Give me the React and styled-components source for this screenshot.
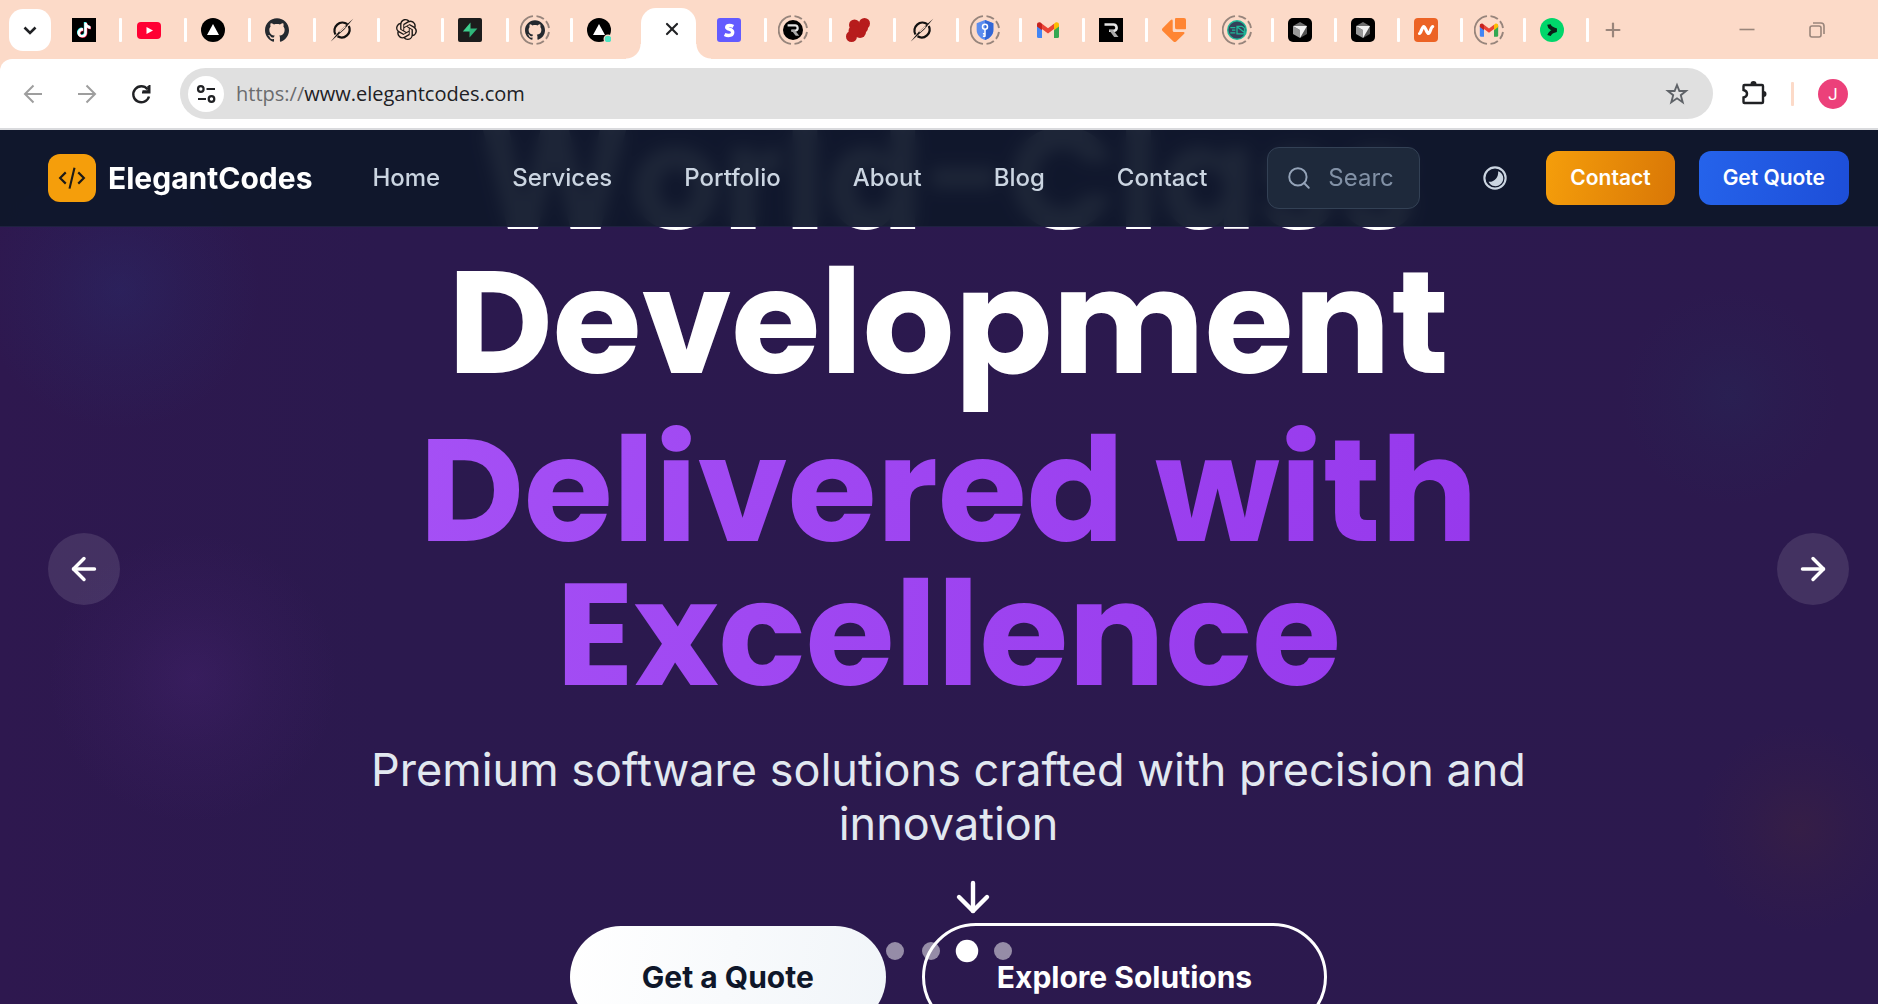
import React from "react";
import styled, { createGlobalStyle, css } from "styled-components";
import { ArrowLeft, ArrowRight, ArrowDown, X, Plus, Search } from "lucide-react";
import { SiGithub, SiOpenai, SiTiktok } from "react-icons/si";

const GlobalStyle = createGlobalStyle`
  *, *::before, *::after { box-sizing: border-box; }
  body { margin: 0; background: #2c1a4e; overflow: hidden; }
  button, input { font: inherit; color: inherit; }
  a { color: inherit; text-decoration: none; }
`;

const Window = styled.div`
  display: flex;
  flex-direction: column;
  height: 100vh;
  overflow: hidden;
  font-family: Inter, "Liberation Sans", sans-serif;
`;

/* ---------- browser: tab strip ---------- */

const TabStrip = styled.div`
  display: flex;
  align-items: center;
  height: 59px;
  flex: none;
  background: #fcdac8;
`;

const PlainButton = styled.button`
  display: flex;
  align-items: center;
  justify-content: center;
  flex: none;
  padding: 0;
  border: 0;
  background: none;
`;

const TabSearch = styled(PlainButton)`
  width: 42px;
  height: 42px;
  margin: 0 6px 0 9px;
  border-radius: 14px;
  background: #fff;
`;

const TabGroup = styled.div`
  display: flex;
  flex: none;
  width: ${(p) => p.$width}px;
`;

const Tab = styled(PlainButton)`
  flex: 1;
  height: 32px;
  padding-right: 10px;
  justify-content: center;
  position: relative;
  ${(p) =>
    p.$divided &&
    css`
      &::after {
        content: "";
        position: absolute;
        right: -1px;
        top: 4px;
        width: 3px;
        height: 24px;
        border-radius: 1px;
        background: #fff;
      }
    `}
`;

const ActiveTab = styled.div`
  display: flex;
  align-items: center;
  justify-content: center;
  align-self: flex-end;
  flex: none;
  position: relative;
  width: 55px;
  height: 51px;
  margin: 0 6px 0 5px;
  padding: 0 0 9px 6px;
  border-radius: 15px 15px 0 0;
  background: #fff;
  &::before,
  &::after {
    content: "";
    position: absolute;
    bottom: 0;
    width: 15px;
    height: 15px;
  }
  &::before {
    right: 100%;
    background: radial-gradient(circle at 0 0, transparent 14px, #fff 15px);
  }
  &::after {
    left: 100%;
    background: radial-gradient(circle at 100% 0, transparent 14px, #fff 15px);
  }
`;

const NewTab = styled(PlainButton)`
  width: 24px;
  height: 24px;
  margin-left: 13px;
  color: #99857b;
`;

const WindowControls = styled.div`
  display: flex;
  gap: 46px;
  margin-left: auto;
  margin-right: 49px;
`;

const ControlButton = styled(PlainButton)`
  width: 24px;
  height: 24px;
`;

/* ---------- browser: toolbar ---------- */

const ToolbarBack = styled.div`
  flex: none;
  background: #fcdac8;
`;

const Toolbar = styled.div`
  display: flex;
  align-items: center;
  height: 71px;
  padding: 0 30px 0 21px;
  border-bottom: 2px solid #d9dadd;
  border-radius: 12px 0 0 0;
  background: #fff;
`;

const NavTools = styled.div`
  display: flex;
  gap: 30px;
  margin-right: 27px;
`;

const NavTool = styled(PlainButton)`
  width: 24px;
  height: 24px;
`;

const Omnibox = styled.div`
  display: flex;
  align-items: center;
  flex: 1;
  height: 51px;
  padding: 0 24px 0 8px;
  border-radius: 26px;
  background: #e0e0e0;
`;

const SiteInfo = styled(PlainButton)`
  width: 36px;
  height: 36px;
  border-radius: 50%;
  background: #fff;
`;

const Address = styled.a`
  flex: 1;
  margin-left: 12px;
  font-family: "Open Sans", "Noto Sans", sans-serif;
  font-size: 20px;
  line-height: 28px;
  color: #202124;
`;

const Scheme = styled.span`
  color: #6b6c6e;
`;

const Extensions = styled(PlainButton)`
  width: 28px;
  height: 28px;
  margin-left: 27px;
`;

const ToolbarRule = styled.div`
  width: 3px;
  height: 24px;
  margin: 0 24px 0 23px;
  border-radius: 1px;
  background: #fcdac8;
`;

const Avatar = styled(PlainButton)`
  width: 30px;
  height: 30px;
  border-radius: 50%;
  background: #ec407a;
  color: #fff;
  font-family: Roboto, sans-serif;
  font-size: 17px;
`;

/* ---------- site ---------- */

const Viewport = styled.div`
  flex: 1;
  min-height: 0;
  overflow: hidden;
`;

const Site = styled.div`
  position: relative;
  width: calc(100% + 19px);
  height: 100%;
  overflow: hidden;
  background:
    radial-gradient(circle 140px at 120px 160px, rgba(38, 60, 130, 0.24), rgba(38, 60, 130, 0.1) 50%, transparent),
    radial-gradient(circle 145px at 193px 548px, rgba(105, 50, 160, 0.18), rgba(105, 50, 160, 0.07) 50%, transparent),
    radial-gradient(circle 110px at calc(100% - 167px) 266px, rgba(30, 60, 100, 0.18), rgba(30, 60, 100, 0.07) 50%, transparent),
    radial-gradient(circle 105px at calc(100% - 97px) 698px, rgba(90, 50, 40, 0.2), rgba(90, 50, 40, 0.08) 50%, transparent),
    linear-gradient(90deg, #2e184f, #2b194e 20%, #2c194e);
`;

const Header = styled.header`
  position: absolute;
  z-index: 2;
  top: 0;
  left: 0;
  right: 0;
  display: flex;
  align-items: center;
  height: 97px;
  padding: 0 48px;
  border-bottom: 1px solid #1e2140;
  background: rgba(15, 23, 42, 0.94);
  backdrop-filter: blur(8px);
`;

const Brand = styled.a`
  display: flex;
  align-items: center;
  gap: 12px;
  margin-right: 60px;
  color: #fff;
  font-size: 30px;
  font-weight: 700;
  line-height: 36px;
`;

const BrandMark = styled.span`
  display: flex;
  align-items: center;
  justify-content: center;
  width: 48px;
  height: 48px;
  border-radius: 12px;
  background: #f59e0b;
`;

const Menu = styled.nav`
  display: flex;
  gap: 72px;
  margin-right: 60px;
  color: #cbd5e1;
  font-size: 24px;
  font-weight: 500;
  line-height: 36px;
`;

const SearchBox = styled.label`
  display: flex;
  align-items: center;
  gap: 16px;
  width: 153px;
  height: 62px;
  padding: 0 24px 0 18px;
  border: 1px solid #334155;
  border-radius: 12px;
  background: #1e293b;
  color: #94a3b8;
  svg { flex: none; }
`;

const SearchInput = styled.input`
  width: 66px;
  min-width: 0;
  padding: 0;
  border: 0;
  outline: 0;
  background: none;
  font-size: 24px;
  line-height: 36px;
  &::placeholder { color: #8291a6; opacity: 1; }
`;

const ThemeToggle = styled(PlainButton)`
  width: 30px;
  height: 30px;
  margin-left: auto;
  margin-right: 36px;
`;

const HeaderActions = styled.div`
  display: flex;
  gap: 24px;
`;

const HeaderAction = styled.a`
  padding: 0 24px;
  border-radius: 12px;
  background: ${(p) => p.$fill};
  color: #fff;
  font-size: 21px;
  font-weight: 600;
  line-height: 54px;
`;

const Hero = styled.main`
  display: flex;
  flex-direction: column;
  align-items: center;
  margin-top: -23px;
  text-align: center;
`;

const Title = styled.h1`
  width: 100%;
  max-width: 1536px;
  margin: 0;
  color: #fff;
  font-family: Poppins, Inter, sans-serif;
  font-size: 144px;
  font-weight: 700;
  line-height: 144px;
`;

const TitleLine = styled.span`
  display: block;
`;

const Accent = styled.span`
  display: block;
  margin-top: 24px;
  background: linear-gradient(100deg, #a855f7, #9333ea);
  background-clip: text;
  -webkit-background-clip: text;
  color: transparent;
`;

const Lead = styled.p`
  max-width: 1344px;
  margin: 36px 0 72px;
  color: #e2e8f0;
  font-size: 45px;
  line-height: 54px;
`;

const HeroActions = styled.div`
  display: flex;
  align-items: center;
  gap: 36px;
`;

const HeroAction = styled.a`
  padding: 0 72px;
  border-radius: 54px;
  font-size: 30px;
  font-weight: 700;
  line-height: 102px;
  ${(p) =>
    p.$outline
      ? css`
          border: 3px solid #fff;
          color: #fff;
        `
      : css`
          background: linear-gradient(100deg, #fff, #f1f5f9);
          color: #0f172a;
        `}
`;

const SlideButton = styled(PlainButton)`
  position: absolute;
  top: 403px;
  ${(p) => p.$side}: 48px;
  width: 72px;
  height: 72px;
  border-radius: 50%;
  background: rgba(255, 255, 255, 0.11);
  color: #fff;
`;

const ScrollCue = styled(PlainButton)`
  position: absolute;
  left: 50%;
  top: 743px;
  color: #fff;
`;

const Dots = styled.div`
  position: absolute;
  top: 812px;
  left: 0;
  right: 0;
  display: flex;
  justify-content: center;
  gap: 18px;
  pointer-events: none;
`;

const Dot = styled(PlainButton)`
  width: 18px;
  height: 18px;
  border-radius: 50%;
  background: ${(p) => (p.$active ? "#fff" : "rgba(255, 255, 255, 0.5)")};
  transform: ${(p) => (p.$active ? "scale(1.25)" : "none")};
`;

/* ---------- favicons ---------- */

const Ico = ({ size = 24, children, box = "0 0 24 24" }) => (
  <svg width={size} height={size} viewBox={box} fill="none">{children}</svg>
);

const Ringed = ({ children }) => (
  <Ico size={30} box="0 0 30 30">
    <g stroke="#97857c" strokeWidth="1.9">
      <path d="M13 1.1A14 14 0 0 0 13 28.9" />
      <path d="M16.5 1.1A14 14 0 0 1 29 13" strokeDasharray="8 3" />
      <path d="M16.5 28.9A14 14 0 0 0 29 17" strokeDasharray="8 3" />
    </g>
    <svg x="5" y="5" width="20" height="20" viewBox="0 0 24 24">{children}</svg>
  </Ico>
);

const TikTok = () => (
  <Ico>
    <path d="M0 0h24v24H0z" fill="#000" />
    <SiTiktok size={15} x="4" y="4" color="#25f4ee" />
    <SiTiktok size={15} x="5" y="5" color="#fe2c55" />
    <SiTiktok size={15} x="4.5" y="4.5" color="#fff" />
  </Ico>
);
const YouTube = () => (
  <Ico>
    <rect y="4" width="24" height="17" rx="4" fill="#ff0033" />
    <path d="m9.5 9 6.5 3.5-6.500 3.500z" fill="#fff" />
  </Ico>
);
const Vercel = ({ live }) => (
  <Ico>
    <circle cx="12" cy="12" r="12" fill="#000" />
    <path d="m12 6 6 11H6z" fill="#fff" />
    {live && <circle cx="21" cy="21" r="4.500" fill="#fcdac8" />}
    {live && <circle cx="21" cy="21" r="3.300" fill="#50e3c2" />}
  </Ico>
);
const Grok = () => (
  <Ico>
    <path d="M17.300 6.200A8 8 0 0 0 5.500 16.500M7.500 18.300A8 8 0 0 0 18.800 8" stroke="#111" strokeWidth="2.300" />
    <path d="M.8 23.500 9 13.500 23.200.8 14.500 11.200z" fill="#111" />
    <path d="m9.500 14 6-5.500" stroke="#fcdac8" strokeWidth="1.200" />
  </Ico>
);
const Supabase = () => (
  <Ico>
    <rect width="24" height="24" rx="2" fill="#1c1c1c" />
    <path d="M12.500 4.500 4.800 13.500h7.700z" fill="#3ecf8e" />
    <path d="M11.500 19.500 19.400 10.500h-7.900z" fill="#2fb67a" />
  </Ico>
);
const Stripe = () => (
  <Ico>
    <rect width="24" height="24" rx="3" fill="#635bff" />
    <path d="M16.300 8.500c-1.300-.7-2.600-1.100-3.900-1.100-1.800 0-2.700.7-2.700 1.800 0 2.600 6 1.300 6 5.100 0 2-1.600 3.200-4.200 3.200-1.300 0-2.700-.4-3.900-1" stroke="#fff" strokeWidth="3.400" />
  </Ico>
);
const RMark = () => (
  <>
    <path d="M5.500 6.500h9a3.200 3.200 0 0 1 1 6.200H10" stroke="#e4e4e4" strokeWidth="2.600" />
    <path d="m10 12 4 0 5.500 7h-4.300z" fill="#aaa" />
  </>
);
const RCircle = () => (
  <Ringed><circle cx="12" cy="12" r="12" fill="#000" /><RMark /></Ringed>
);
const RSquare = () => (
  <Ico><path d="M0 0h24v24H0z" fill="#000" /><RMark /></Ico>
);
const RedDots = () => (
  <Ico>
    <g fill="#b71c1c">
      <circle cx="8.500" cy="7" r="5.500" /><circle cx="18.500" cy="5.500" r="5.500" />
      <circle cx="14" cy="14" r="6" /><circle cx="5.500" cy="18.500" r="5.500" />
      <circle cx="8" cy="13" r="5.500" /><circle cx="17" cy="10" r="5" />
    </g>
  </Ico>
);
const Shield = () => (
  <Ringed>
    <path d="m12 0 10 4v8c0 5.500-4 10-10 12C6 22 2 17.500 2 12V4z" fill="#5b8def" />
    <path d="m12 0 10 4v8c0 5.500-4 10-10 12z" fill="#3367d6" />
    <circle cx="12" cy="8" r="3" stroke="#fff" strokeWidth="1.800" />
    <path d="M12 11v9M12 16.500h-2.500M12 19.500h-2.500" stroke="#fff" strokeWidth="1.800" />
  </Ringed>
);
const GmailMark = () => (
  <>
    <path d="M1 7v11.500A1.500 1.500 0 0 0 2.500 20H6v-9.500z" fill="#4285f4" />
    <path d="M23 7v11.500a1.500 1.500 0 0 1-1.500 1.500H18v-9.500z" fill="#34a853" />
    <path d="m18 5.700-6 4.500-6-4.500v5.200l6 4.500 6-4.500z" fill="#ea4335" />
    <path d="M1 6.500v2l5 3.700V5.700l-1.200-.9C3.200 3.600 1 4.700 1 6.500z" fill="#c5221f" />
    <path d="M23 6.500v2l-5 3.700V5.700l1.200-.9C20.800 3.600 23 4.700 23 6.500z" fill="#fbbc04" />
  </>
);
const Gmail = () => <Ico><GmailMark /></Ico>;
const RingedGmail = () => <Ringed><GmailMark /></Ringed>;
const OrangeBlocks = () => (
  <Ico>
    <path d="M8.500 2.200q2-1.700 2.200.6v9.700a1.500 1.500 0 0 0 1.500 1.500h9.300a1 1 0 0 1 .7 1.700l-8 7.700a2 2 0 0 1-2.800 0L.6 13a2 2 0 0 1 0-2.800z" fill="#ff8533" />
    <path d="M14 0h8a2 2 0 0 1 2 2v8.500a1 1 0 0 1-1 1h-8a2 2 0 0 1-2-2V1a1 1 0 0 1 1-1z" fill="#ff8533" />
    <path d="M11.900 0v10.700a1.800 1.800 0 0 0 1.800 1.800H24" stroke="#fcdac8" strokeWidth="1.800" />
  </Ico>
);
const MailDisc = () => (
  <Ringed>
    <circle cx="12" cy="12" r="12" fill="#1fb899" />
    <circle cx="12" cy="12" r="10.300" fill="#34405a" />
    <path d="M12 7.500h6l3 2.500v6.500h-9zM12 8l9 7M4 9h6M6 12h4M4 15.500h6" stroke="#1fb899" strokeWidth="1.500" />
  </Ringed>
);
const Cursor = () => (
  <Ico>
    <rect width="24" height="24" rx="5" fill="#000" />
    <path d="m12 4 7 4-7 4-7-4z" fill="#6d6d6d" />
    <path d="M5 8v8l7 4v-8z" fill="#999" />
    <path d="M19 8v8l-7 4v-8z" fill="#555" />
    <path d="M5 8h14l-7 12v-8z" fill="#f2f2f2" />
  </Ico>
);
const Namecheap = () => (
  <Ico>
    <rect width="24" height="24" rx="4" fill="#ec6325" />
    <path d="M5.500 15.500C7 15.500 8 8.500 9.700 8.500S12.800 15.500 14.500 15.500 17 8.500 18.700 8.500" stroke="#fff" strokeWidth="3.200" strokeLinecap="round" />
  </Ico>
);
const GreenArrow = () => (
  <Ico>
    <circle cx="12" cy="12" r="12" fill="#00d66b" />
    <path d="M9 6.500c.3 3.500 3.500 4.500 7.500 5.700C12.500 13 10 14.500 9 17.500" stroke="#0b2018" strokeWidth="3.600" />
  </Ico>
);
const GitHub = () => <SiGithub size={24} color="#24292f" />;
const RingedGitHub = () => <Ringed><SiGithub size={24} color="#24292f" /></Ringed>;
const OpenAI = () => <SiOpenai size={21} color="#1c1917" />;

const leftTabs = [
  ["TikTok", TikTok], ["YouTube", YouTube], ["Vercel", Vercel], ["GitHub", GitHub],
  ["Grok", Grok], ["ChatGPT", OpenAI], ["Supabase", Supabase], ["GitHub issues", RingedGitHub],
];
const middleTabs = [["Stripe", Stripe], ["Render", RCircle], ["Twilio", RedDots]];
const rightTabs = [
  ["Grok chat", Grok], ["Password manager", Shield], ["Gmail", Gmail], ["Resend", RSquare],
  ["Blocks", OrangeBlocks], ["Mail", MailDisc], ["Cursor", Cursor], ["Cursor docs", Cursor],
  ["Namecheap", Namecheap], ["Inbox", RingedGmail], ["Terminal", GreenArrow],
];

const Tabs = ({ items, width }) => (
  <TabGroup $width={width}>
    {items.map(([name, Icon]) => (
      <Tab key={name} aria-label={name} $divided><Icon /></Tab>
    ))}
  </TabGroup>
);

const Browser = () => (
  <>
    <TabStrip>
      <TabSearch aria-label="Search tabs">
        <Ico><path d="m6.500 9.500 5.500 5.500 5.500-5.500" stroke="#202124" strokeWidth="2.600" /></Ico>
      </TabSearch>
      <Tabs items={leftTabs} width={515} />
      <TabGroup $width={64}><Tab aria-label="Deployments"><Vercel live /></Tab></TabGroup>
      <ActiveTab><PlainButton aria-label="Close tab"><X size={20} color="#202124" strokeWidth={2.6} /></PlainButton></ActiveTab>
      <Tabs items={middleTabs} width={193} />
      <Tabs items={rightTabs} width={693} />
      <NewTab aria-label="New tab"><Plus size={22} strokeWidth={2.4} /></NewTab>
      <WindowControls>
        <ControlButton aria-label="Minimize"><Ico><path d="M4.500 11.500h15" stroke="#99857b" strokeWidth="1.600" /></Ico></ControlButton>
        <ControlButton aria-label="Restore">
          <Ico>
            <rect x="5" y="8" width="11" height="11" rx="2" stroke="#99857b" strokeWidth="1.600" />
            <path d="M8 5h8a3 3 0 0 1 3 3v8" stroke="#99857b" strokeWidth="1.600" />
          </Ico>
        </ControlButton>
      </WindowControls>
    </TabStrip>
    <ToolbarBack>
      <Toolbar>
        <NavTools>
          <NavTool aria-label="Back"><Ico><path d="M21 12H4.500M12.500 3.500 4 12l8.500 8.500" stroke="#9e9e9e" strokeWidth="2" /></Ico></NavTool>
          <NavTool aria-label="Forward"><Ico><path d="M3 12h16.500M11.500 3.500 20 12l-8.500 8.500" stroke="#9e9e9e" strokeWidth="2" /></Ico></NavTool>
          <NavTool aria-label="Reload">
            <Ico>
              <path d="M18.500 7.200A8 8 0 1 0 20 14.500" stroke="#202124" strokeWidth="2.400" />
              <path d="M20.500 3v7.500H13M13.500 9.300h5.800V4" stroke="#202124" strokeWidth="2" />
            </Ico>
          </NavTool>
        </NavTools>
        <Omnibox>
          <SiteInfo aria-label="Site information">
            <Ico>
              <g stroke="#202124" strokeWidth="2.200">
                <circle cx="6.800" cy="7" r="2.800" /><path d="M12.500 7H21M4 17h8" />
                <circle cx="17.500" cy="17" r="2.800" />
              </g>
            </Ico>
          </SiteInfo>
          <Address href="#"><Scheme>https://</Scheme>www.elegantcodes.com</Address>
          <PlainButton aria-label="Bookmark">
            <Ico><path d="m12 3 2.400 6h6.600l-5.200 4.200 1.900 7L12 16.300 6.300 20.200l1.900-7L3 9h6.600z" stroke="#5f6368" strokeWidth="1.900" /></Ico>
          </PlainButton>
        </Omnibox>
        <Extensions aria-label="Extensions">
          <Ico size={28} box="0 0 28 28">
            <path d="M4.500 5h17.500a1 1 0 0 1 1 1v16a1 1 0 0 1-1 1H4.500a1 1 0 0 1-1-1v-4.500c4.700-1 4.700-6.500 0-7.500V6a1 1 0 0 1 1-1z" stroke="#202124" strokeWidth="2.400" />
            <path d="M10.500 4a3 3 0 0 1 6 0zM23.500 11a3 3 0 0 1 0 6z" fill="#202124" />
          </Ico>
        </Extensions>
        <ToolbarRule />
        <Avatar aria-label="Profile">J</Avatar>
      </Toolbar>
    </ToolbarBack>
  </>
);

export default function App() {
  return (
    <Window>
      <GlobalStyle />
      <Browser />
      <Viewport>
        <Site>
          <Header>
            <Brand href="#">
              <BrandMark>
                <Ico size={30}>
                  <path d="m7 7.500-4.500 4.500L7 16.500M17 7.500l4.500 4.500-4.500 4.500M14 3.800 10 20.500" stroke="#1c1a17" strokeWidth="1.700" />
                </Ico>
              </BrandMark>
              ElegantCodes
            </Brand>
            <Menu>
              {["Home", "Services", "Portfolio", "About", "Blog", "Contact"].map((item) => (
                <a key={item} href="#">{item}</a>
              ))}
            </Menu>
            <SearchBox>
              <Search size={26} strokeWidth={1.8} aria-hidden="true" />
              <SearchInput type="text" placeholder="Search..." aria-label="Search" />
            </SearchBox>
            <ThemeToggle aria-label="Toggle theme">
              <Ico size={30}>
                <circle cx="12" cy="12" r="8.500" stroke="#cbd5e1" strokeWidth="1.700" />
                <path d="M14.500 6.500A6.200 6.200 0 1 1 6.800 15c4.500.5 8.200-3.500 7.700-8.500z" fill="#cbd5e1" />
              </Ico>
            </ThemeToggle>
            <HeaderActions>
              <HeaderAction href="#" $fill="linear-gradient(100deg, #f59e0b, #d97706)">Contact</HeaderAction>
              <HeaderAction href="#" $fill="linear-gradient(100deg, #2563eb, #1d4ed8)">Get Quote</HeaderAction>
            </HeaderActions>
          </Header>
          <Hero>
            <Title>
              <TitleLine>World-Class</TitleLine>
              <TitleLine>Development</TitleLine>
              <Accent>Delivered with<br />Excellence</Accent>
            </Title>
            <Lead>Premium software solutions crafted with precision and<br />innovation</Lead>
            <HeroActions>
              <HeroAction href="#">Get a Quote</HeroAction>
              <HeroAction href="#" $outline>Explore Solutions</HeroAction>
            </HeroActions>
          </Hero>
          <SlideButton $side="left" aria-label="Previous slide"><ArrowLeft size={36} strokeWidth={2.3} /></SlideButton>
          <SlideButton $side="right" aria-label="Next slide"><ArrowRight size={36} strokeWidth={2.3} /></SlideButton>
          <ScrollCue aria-label="Scroll down"><ArrowDown size={48} strokeWidth={2.2} /></ScrollCue>
          <Dots>
            {[0, 1, 2, 3].map((i) => (
              <Dot key={i} aria-label={`Slide ${i + 1}`} $active={i === 2} />
            ))}
          </Dots>
        </Site>
      </Viewport>
    </Window>
  );
}
